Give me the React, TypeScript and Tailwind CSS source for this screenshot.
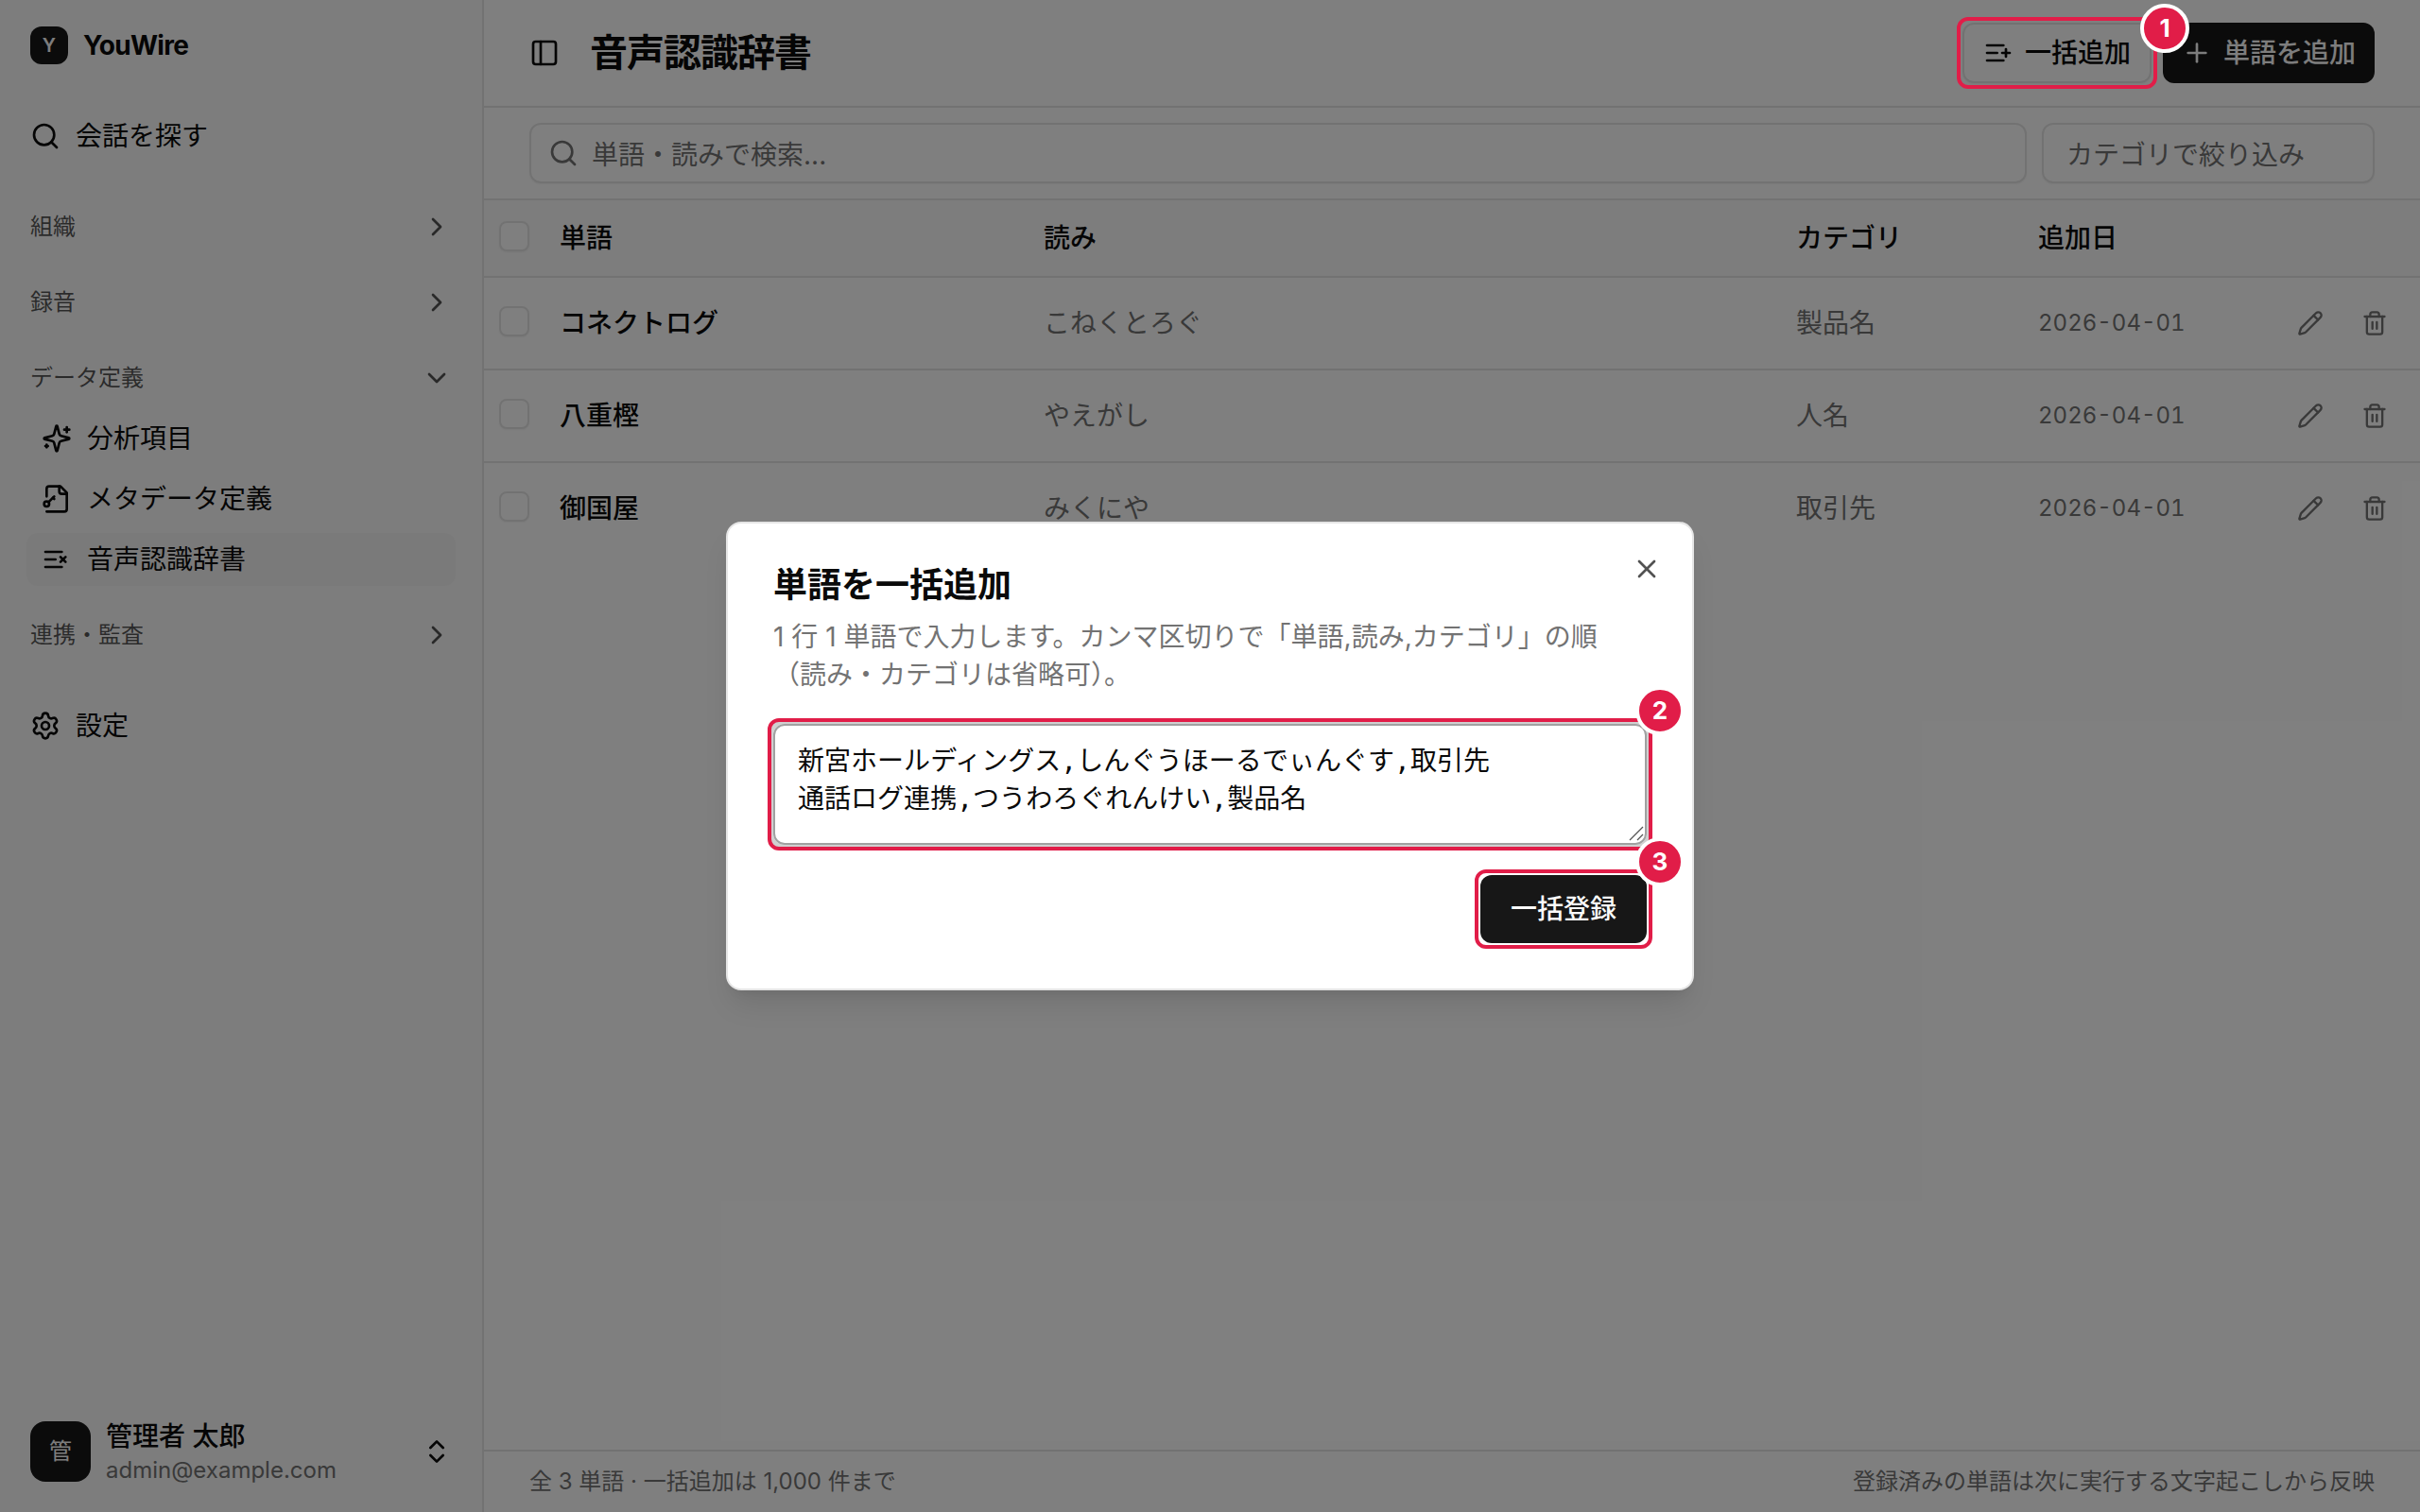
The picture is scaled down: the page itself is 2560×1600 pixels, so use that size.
import type { ReactNode } from "react"
import {
  ChevronDown,
  ChevronRight,
  ChevronsUpDown,
  PanelLeft,
  Pencil,
  Plus,
  Search,
  Settings,
  Trash2,
  X,
} from "lucide-react"

function Icon({ children, className = "" }: { children: ReactNode; className?: string }) {
  return (
    <svg
      viewBox="0 0 24 24"
      fill="none"
      stroke="currentColor"
      strokeWidth="2"
      strokeLinecap="round"
      strokeLinejoin="round"
      className={`size-8 shrink-0 ${className}`}
    >
      {children}
    </svg>
  )
}

function SparklesIcon() {
  return (
    <Icon>
      <path d="M9.937 15.5A2 2 0 0 0 8.5 14.063l-6.135-1.582a.5.5 0 0 1 0-.962L8.5 9.936A2 2 0 0 0 9.937 8.5l1.582-6.135a.5.5 0 0 1 .963 0L14.063 8.5A2 2 0 0 0 15.5 9.937l6.135 1.581a.5.5 0 0 1 0 .964L15.5 14.063a2 2 0 0 0-1.437 1.437l-1.582 6.135a.5.5 0 0 1-.963 0z" />
      <path d="M20 3v4" />
      <path d="M22 5h-4" />
      <path d="M4 17v2" />
      <path d="M5 18H3" />
    </Icon>
  )
}

function FileKeyIcon() {
  return (
    <Icon>
      <path d="M4 22h14a2 2 0 0 0 2-2V7l-5-5H6a2 2 0 0 0-2 2v6" />
      <path d="M14 2v4a2 2 0 0 0 2 2h4" />
      <circle cx="4" cy="16" r="2" />
      <path d="m10 10-4.5 4.5" />
      <path d="m9 11 1 1" />
    </Icon>
  )
}

function ListXIcon() {
  return (
    <Icon>
      <path d="M11 12H3" />
      <path d="M16 6H3" />
      <path d="M16 18H3" />
      <path d="m19 10-4 4" />
      <path d="m15 10 4 4" />
    </Icon>
  )
}

function ListPlusIcon() {
  return (
    <Icon>
      <path d="M11 12H3" />
      <path d="M16 6H3" />
      <path d="M16 18H3" />
      <path d="M18 9v6" />
      <path d="M21 12h-6" />
    </Icon>
  )
}

const dataItems = [
  { icon: SparklesIcon, label: "分析項目" },
  { icon: FileKeyIcon, label: "メタデータ定義" },
  { icon: ListXIcon, label: "音声認識辞書", active: true },
]

const words = [
  { word: "コネクトログ", reading: "こねくとろぐ", category: "製品名", date: "2026-04-01" },
  { word: "八重樫", reading: "やえがし", category: "人名", date: "2026-04-01" },
  { word: "御国屋", reading: "みくにや", category: "取引先", date: "2026-04-01" },
]

function GroupLabel({ label, open = false }: { label: string; open?: boolean }) {
  const Chevron = open ? ChevronDown : ChevronRight
  return (
    <div className="flex h-14 items-center justify-between px-2 text-2xl text-[#0a0a0a]/70">
      <span className="pb-px">{label}</span>
      <Chevron className="size-8" />
    </div>
  )
}

function Sidebar() {
  return (
    <aside className="flex w-[512px] shrink-0 flex-col border-r-2 border-[#e5e5e5] bg-[#fafafa] px-6">
      <div className="flex h-24 items-center gap-4 pl-2">
        <div className="flex size-10 items-center justify-center rounded-xl bg-[#171717] text-[20px] font-semibold text-[#fafafa]">
          Y
        </div>
        <span className="text-[28px] font-bold tracking-tight">YouWire</span>
      </div>

      <nav className="mt-5 flex flex-1 flex-col">
        <a className="flex h-14 items-center gap-4 pl-2 text-[28px]">
          <Search className="size-8" />
          会話を探す
        </a>

        <div className="mt-10 flex flex-col gap-6">
          <GroupLabel label="組織" />
          <GroupLabel label="録音" />
          <div>
            <GroupLabel label="データ定義" open />
            <ul className="mt-2 flex flex-col gap-2 px-1">
              {dataItems.map((item) => (
                <li
                  key={item.label}
                  className={`flex h-14 items-center gap-4 rounded-xl px-4 text-[28px] ${item.active ? "bg-[#f5f5f5]" : ""}`}
                >
                  <item.icon />
                  {item.label}
                </li>
              ))}
            </ul>
          </div>
          <GroupLabel label="連携・監査" />
        </div>

        <a className="mt-10 flex h-14 items-center gap-4 pl-2 text-[28px]">
          <Settings className="size-8" />
          設定
        </a>
      </nav>

      <div className="flex h-32 items-center gap-4 px-2">
        <div className="flex size-16 items-center justify-center rounded-2xl bg-[#171717] text-2xl text-[#fafafa]">管</div>
        <div className="flex flex-1 flex-col pt-[3px]">
          <span className="text-[28px] font-medium leading-9">管理者 太郎</span>
          <span className="text-2xl leading-9 text-[#737373]">admin@example.com</span>
        </div>
        <ChevronsUpDown className="size-8" />
      </div>
    </aside>
  )
}

function Checkbox() {
  return <div className="-mt-1 size-8 rounded-lg border-2 border-[#e5e5e5] bg-white shadow-xs" />
}

function WordTable() {
  return (
    <table className="w-full table-fixed border-separate border-spacing-0 text-left text-[28px]">
      <colgroup>
        <col className="w-16" />
        <col className="w-[512px]" />
        <col className="w-[796px]" />
        <col className="w-[256px]" />
        <col />
      </colgroup>
      <thead>
        <tr className="h-[82px] bg-[#fafafa] *:border-b-2 *:border-[#e5e5e5] *:px-4 *:font-medium">
          <th>
            <Checkbox />
          </th>
          <th>単語</th>
          <th>読み</th>
          <th>カテゴリ</th>
          <th>追加日</th>
        </tr>
      </thead>
      <tbody>
        {words.map((row) => (
          <tr key={row.word} className="h-[98px] *:border-b-2 *:border-[#e5e5e5] *:px-4 last:h-24 last:*:border-b-0">
            <td>
              <Checkbox />
            </td>
            <td className="font-medium">{row.word}</td>
            <td className="text-[#737373]">{row.reading}</td>
            <td className="text-[#737373]">{row.category}</td>
            <td className="text-[#737373]">
              <div className="flex items-center justify-between">
                <span className="text-2xl tabular-nums">{row.date}</span>
                <div className="flex gap-1">
                  <button className="flex size-16 items-center justify-center">
                    <Pencil className="size-7" />
                  </button>
                  <button className="flex size-16 items-center justify-center">
                    <Trash2 className="size-7" />
                  </button>
                </div>
              </div>
            </td>
          </tr>
        ))}
      </tbody>
    </table>
  )
}

function StepBadge({ n, className }: { n: number; className: string }) {
  return (
    <span
      className={`absolute flex size-[52px] items-center justify-center rounded-full border-4 border-white bg-[#e11d48] text-[26px] font-bold leading-none text-white ${className}`}
    >
      {n}
    </span>
  )
}

function BulkAddDialog() {
  return (
    <div className="relative flex w-[1024px] flex-col gap-8 rounded-2xl border-2 border-[#e5e5e5] bg-white p-12 shadow-[0_20px_30px_-6px_rgba(0,0,0,0.1),0_8px_12px_-8px_rgba(0,0,0,0.1)]">
      <div className="flex flex-col gap-[18px]">
        <h2 className="text-4xl/[34px] font-semibold">単語を一括追加</h2>
        <p className="text-[28px] leading-10 text-[#737373]">
          1 行 1 単語で入力します。カンマ区切りで「単語,読み,カテゴリ」の順
          <br />
          （読み・カテゴリは省略可）。
        </p>
      </div>

      <div className="relative">
        <textarea
          readOnly
          className="block h-32 w-full resize-none overflow-hidden rounded-xl border-2 border-[#a1a1a1] px-6 pb-3 pt-[18px] font-['DejaVu_Sans_Mono','Noto_Sans_CJK_JP',monospace] text-[28px] leading-10 tracking-[0.03px] shadow-[0_0_0_6px_rgba(161,161,161,0.5)] outline-none"
          value={"新宮ホールディングス,しんぐうほーるでぃんぐす,取引先\n通話ログ連携,つうわろぐれんけい,製品名"}
        />
        {/* Resize grip */}
        <svg viewBox="0 0 16 16" className="absolute bottom-1 right-[3px] size-4" stroke="#555" strokeWidth="1.3" fill="none">
          <path d="M1 15 15 1M9 15l6-6" />
        </svg>
        <div className="pointer-events-none absolute -inset-1.5 rounded-xl border-4 border-[#e11d48]" />
        <StepBadge n={2} className="-right-10 -top-10" />
      </div>

      <div className="flex justify-end">
        <div className="relative">
          <button className="block h-[72px] rounded-xl bg-[#171717] px-8 text-[28px] font-medium text-[#fafafa]">一括登録</button>
          <div className="pointer-events-none absolute -inset-1.5 rounded-xl border-4 border-[#e11d48]" />
          <StepBadge n={3} className="-right-10 -top-10" />
        </div>
      </div>

      <X className="absolute right-8 top-8 size-8 opacity-70" />
    </div>
  )
}

export default function App() {
  return (
    <div
      lang="ja"
      className="relative flex h-[1600px] w-[2560px] overflow-hidden bg-white font-['Inter','Noto_Sans_CJK_JP',sans-serif] text-[#0a0a0a] antialiased"
    >
      <Sidebar />

      <main className="flex flex-1 flex-col">
        <header className="flex h-[114px] items-center border-b-2 border-[#e5e5e5] px-12">
          <PanelLeft className="size-8" />
          <h1 className="ml-8 flex-1 text-[40px] font-semibold tracking-tight">音声認識辞書</h1>
          <div className="flex gap-3 text-[28px] font-medium">
            <button className="flex h-16 items-center gap-3 rounded-xl border-2 border-[#e5e5e5] px-5 shadow-xs">
              <ListPlusIcon />
              一括追加
            </button>
            <button className="flex h-16 items-center gap-3 rounded-xl bg-[#171717] px-5 text-[#fafafa]">
              <Plus className="size-8" />
              単語を追加
            </button>
          </div>
        </header>

        <div className="flex h-[98px] items-center gap-4 border-b-2 border-[#e5e5e5] px-12 text-[28px] text-[#737373]">
          <div className="flex h-16 flex-1 items-center gap-3.5 rounded-xl border-2 border-[#e5e5e5] px-[18px] shadow-xs">
            <Search className="size-8" />
            <span className="pt-[3px]">単語・読みで検索...</span>
          </div>
          <div className="flex h-16 w-[352px] items-center rounded-xl border-2 border-[#e5e5e5] px-6 pt-[3px] shadow-xs">
            カテゴリで絞り込み
          </div>
        </div>

        <div className="flex-1">
          <WordTable />
        </div>

        <footer className="flex h-[66px] items-center justify-between border-t-2 border-[#e5e5e5] px-12 text-2xl text-[#737373]">
          <span>全 3 単語 · 一括追加は 1,000 件まで</span>
          <span>登録済みの単語は次に実行する文字起こしから反映</span>
        </footer>
      </main>

      {/* Overlay + dialog */}
      <div className="absolute inset-0 flex items-center justify-center bg-black/50">
        <BulkAddDialog />
      </div>

      {/* Step 1 marker over the dimmed header button */}
      <div className="pointer-events-none absolute left-[2070px] top-[18px] h-[76px] w-[212px] rounded-xl border-4 border-[#e11d48]">
        <StepBadge n={1} className="-right-[38px] -top-[18px]" />
      </div>
    </div>
  )
}
